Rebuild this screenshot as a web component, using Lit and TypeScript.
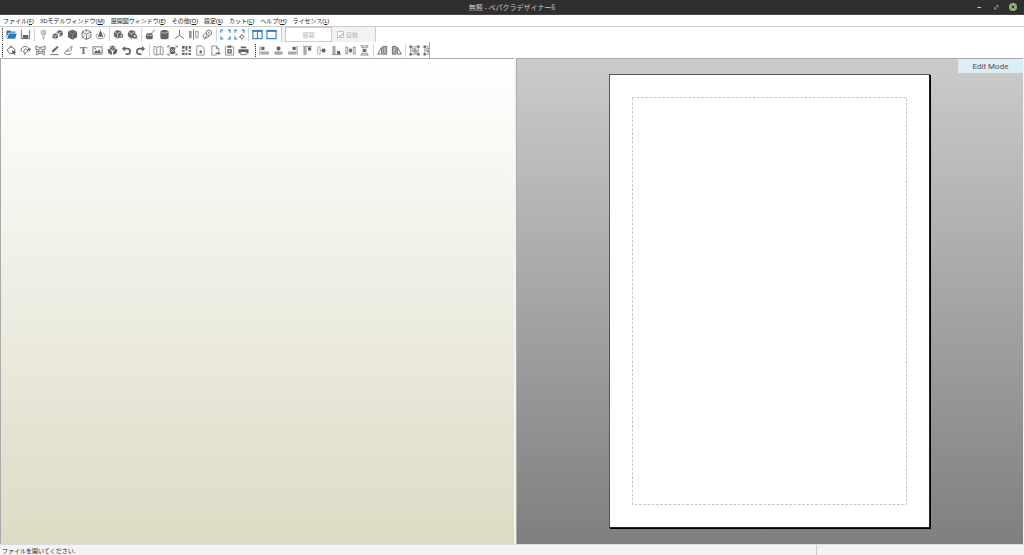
import { LitElement, html, svg, css, type SVGTemplateResult } from "lit";
import { customElement, property } from "lit/decorators.js";

type Tool = [id: string, label: string];

const ICONS: Record<string, SVGTemplateResult> = {
  open: svg`<path class="b" d="M.5 1.5h4l1 1.2h4.600v1.500H3L.5 9z"/><path class="b" d="M3.300 4.800h8.500L10 10.500H1z"/>`,
  save: svg`<path class="l" d="M1.500 1v9.500h9V1"/><path class="f" d="M3 6.500h6v4H3z"/>`,
  bulb: svg`<path fill="#c4c4c4" d="M6 .5a3.300 3.300 0 0 1 2 6L7.500 8h-3L4 6.500a3.300 3.300 0 0 1 2-6z"/><path class="l" stroke="#aaa" d="M5 9.500h2M5.500 11h1"/>`,
  cubes: svg`<path class="f" d="M.5 6.200 3.500 4.500 6.500 6v3.500L3.500 11 .5 9.500z"/><path class="f" d="M5 3 8.500 1 11.700 2.700v4L8 8.500V5.600L5 4z"/><path class="w" d="M1 6.500 3.500 8v2.500M3.500 8l2.500-1.500M6 3.200l2.500 1.300 2.700-1.500M8.500 4.500v3"/>`,
  solid: svg`<path class="f" d="M6 .5 11 3v6L6 11.700 1 9V3z"/><path class="w" opacity=".35" d="M1.500 3.500 6 5.700l4.500-2.200M6 5.700V11"/>`,
  wire: svg`<path class="l" d="M6 .8 10.800 3.200v5.600L6 11.400 1.200 8.800V3.200zM1.200 3.200 6 5.800l4.800-2.600M6 5.800v5.600"/><path class="t" d="M6 .8v3M1.200 8.800 4 7M10.800 8.800 8 7"/>`,
  spin: svg`<path class="f" d="M6 1 9 8.500H3z"/><path class="t" d="M3 4.500C.5 6.500.5 10.500 6 10.500s5.500-4 3-6"/>`,
  texA: svg`<path class="f" d="M1 3.500 4.500 1 9 2.500v6L5 10.500 1 8z"/><path class="w" d="M5 5v5M1.500 3.800 5 5l3.500-2"/><path class="f" d="M7 5.500h4v4H7z"/><path class="w" d="M9 6v3M7.500 7.500h3"/>`,
  texB: svg`<path class="f" d="M1 3.500 4.500 1 9 2.500v6L5 10.500 1 8z"/><path class="w" d="M5 5v2M1.500 3.800 5 5l3.500-2"/><circle class="f" cx="8.500" cy="8" r="2.500"/><circle fill="#fff" cx="8.300" cy="7.800" r="1"/><path class="l" d="m10 9.500 1.500 1.800"/>`,
  edgeA: svg`<path class="f" d="M1 5.500 3 4.500h4L8.500 6v4L7 11.300H3L1 10z"/><path class="w" d="M1.500 6 3.500 7H8"/><path class="l" d="M6 5.500 11 1"/>`,
  edgeB: svg`<path class="f" d="M1.500 3c0-2.500 9-2.500 9 0v6.500c0 2.400-9 2.400-9 0z"/><path class="w" d="M2.200 3.200c1 1.700 6.600 1.700 7.600 0"/>`,
  axes: svg`<path class="l" d="M6 1v6L1 10.500M6 7l5 3.500"/>`,
  mirror: svg`<path fill="#999" d="M1 2h3v8H1z"/><path class="l" d="M6 .5v11"/><path class="t" d="M8.500 2.500h2.500v7H8.500z"/>`,
  link: svg`<circle class="l" cx="7.500" cy="4.200" r="3"/><circle class="t" cx="7.500" cy="4.200" r=".8"/><path class="l" d="M4.500 3.700 1 7.500l2 3.200L8 8M3 10l2.500-3"/>`,
  fit: svg`<path class="bl" d="M1 4V1.200h2.500M8.500 1.200H11V4M11 8v2.800H8.500M3.500 10.800H1V8"/>`,
  fitSet: svg`<path class="bl" d="M1 4V1.200h2.500M8.500 1.200H11V4M3.500 10.800H1V8"/><circle class="l" cx="8.500" cy="8.500" r="1.800"/><path class="t" d="M8.500 5.500V7M8.500 10v1.500M5.500 8.500H7M10 8.500h1.500"/>`,
  split: svg`<path class="bl" d="M1 2h10v8.500H1zM6 2v8.500"/><path class="b" d="M.5 1h11v2H.5z"/>`,
  single: svg`<path class="bl" d="M1 2h10v8.500H1z"/><path class="b" d="M.5 1h11v2H.5z"/>`,
  pick: svg`<path class="l" d="M5.500 1.500 10 5 8.500 9 4 9.500 1 5.500z"/><path class="f" d="M6.500 5.500 11.500 8 9.500 8.800l1 2-1 .5-1-2L7 10.500zM5 .5 7 2.500 3.500 3z"/>`,
  rotate: svg`<path class="l" d="M1.500 7.500C-.5 3 5 0 8.500 2.500l2 3"/><path class="f" d="m11.500 3-.5 4-3-2z"/><path class="l" d="M4 6.500 6 4l3 2.500-2 1L5 10.500z"/>`,
  join: svg`<path class="l" d="M1 1v4h3l2-1.500L8 5h3V1L8 2.500H4zM2 7v4l2-2h4l2 2V7"/><path class="t" d="M4 5v4M8 5v4M1 7h10"/>`,
  pen: svg`<path class="f" d="m3 8 .5-2L9 1l1.500 1.500L5 8z"/><path class="l" d="M1 10.500h9.500"/>`,
  fold: svg`<path class="t" d="M4 6 10 1 9 5.500 5 7z"/><path class="l" d="M5 6C1 7 1 10.500 5 10.500l4-1"/>`,
  text: svg`<text x="6" y="10" text-anchor="middle">T</text>`,
  image: svg`<path class="l" d="M1 2h10v8H1z"/><path class="f" d="m2 9 2.500-3.500L6 7l2-2.500L10 9z"/><circle class="f" cx="3.500" cy="4" r=".8"/>`,
  blocks: svg`<path class="f" d="M6 .5 9 2v2.500L6 6 3 4.500V2zM.5 5 2.500 4.300 5.300 7v4L1.500 9zM11.500 5 9.500 4.300 6.700 7v4l3.800-2z"/><path class="w" d="M3.500 2.300 6 3.500l2.500-1.200"/>`,
  undo: svg`<path class="k" d="M2.500 4h4.500c4 0 4 6 0 6H5"/><path class="f" d="M4.500 1v6L1 4z"/>`,
  redo: svg`<path class="k" d="M9.500 4H5c-4 0-4 6 0 6h2"/><path class="f" d="M7.500 1v6L11 4z"/>`,
  map: svg`<path class="t" d="M1 1.500 4 2.500v8.500L1 10zM4 2.500l4-1V10l-4 1M8 1.500l3 1V11l-3-1"/>`,
  group: svg`<path class="l" d="M1 3V1h2M9 1h2v2M11 9v2H9M3 11H1V9"/><path class="f" d="M2.500 3 6 2l3.500 1-1 3 1 3L6 10 2.500 9l1-3z"/><path class="w" d="m4 4 4 4M8 4 4 8"/>`,
  order: svg`<path class="f" d="M1 1h3v3H1zM5 1h2v5H5zM8.500 1h2.500v3H8.500zM1 5.500h3V7H1zM1 8.500h3V11H1zM5 8.500h2V11H5zM8.500 5.500H11V7H8.500zM8 9h3v2H8z"/>`,
  pageUp: svg`<path class="t" d="M2 1h5.500L10 3.500V11H2z"/><path class="f" d="M5 6h2.500v3H5z"/>`,
  pageOut: svg`<path class="t" d="M7.500 11H2V1h5l2.500 2.500V7M7 1v3h2.500"/><path class="f" d="M6 8.500h3V7l2.500 2L9 11V9.800H6z"/>`,
  clip: svg`<path class="t" d="M1.500 2h9v9h-9z"/><path class="f" d="M4 .5h4v2.500H4zM3.500 4.500h5v4.800h-5z"/><circle fill="#fff" cx="6" cy="6.800" r="1"/>`,
  print: svg`<path class="f" d="M3 1.500h6v2H3zM.5 4.500h11V9H9.500V7.500h-7V9H.5z"/><path class="l" d="M3 8v2.500h6V8"/>`,
  alL: svg`<path class="t" d="M1 1v10"/><path class="f" d="M2.500 2h3.500v3.500H2.500z"/><path class="g" d="M2.500 7.500h8v2.500h-8z"/>`,
  alC: svg`<path class="t" d="M6 1v10"/><path class="f" d="M4 2h4v3.500H4z"/><path class="g" d="M2 7.500h8v2.500H2z"/>`,
  alR: svg`<path class="t" d="M11 1v10"/><path class="f" d="M6 2h3.500v3.500H6z"/><path class="g" d="M1.500 7.500h8v2.500h-8z"/>`,
  alT: svg`<path class="t" d="M1 1.500h10"/><path class="g" d="M2 2.500h2.500v8H2z"/><path class="f" d="M6.500 2.500H10V6H6.500z"/>`,
  alM: svg`<path class="t" d="M1 6h10"/><path class="g o" d="M2 2h2.500v8H2z"/><path class="f" d="M6.500 4H10v4H6.500z"/>`,
  alB: svg`<path class="t" d="M1 10.500h10"/><path class="g" d="M2 1.500h2.500v8.500H2z"/><path class="f" d="M6.500 6.500H10V10H6.500z"/>`,
  spH: svg`<path class="t" d="M1 1.500v9M11 1.500v9"/><path class="f" d="M4.500 4h3v4h-3z"/><path class="t" d="M1 2.500h2v7H1M11 2.500H9v7h2"/>`,
  spV: svg`<path class="t" d="M1.500 1h9M1.500 11h9"/><path class="f" d="M4 4.500h4v3H4z"/><path class="t" d="M3 1v2h6V1M3 11V9h6v2"/>`,
  triL: svg`<path class="d" d="M.8 10 5 2.500V10z"/><path class="d g" d="M6.500 1.500H10.500V10h-4z"/>`,
  triR: svg`<path class="d g" d="M1.500 1.500h4V10h-4z"/><path class="d" d="M7 2.500 11.200 10H7z"/>`,
  frame: svg`<path class="t" d="M2 2h8v8H2zM4 4h3v3H4zM5.500 5.500H8.500v3H5.500z"/><path class="f" d="M.5.500h2.500V3H.5zM9 .5h2.500V3H9zM.5 9H3v2.500H.5zM9 9h2.500v2.500H9z"/>`,
};

const MAIN: Tool[][] = [
  [["open", "開く"], ["save", "保存"]],
  [["bulb", "光源"], ["cubes", "テクスチャ"], ["solid", "面"], ["wire", "線"], ["spin", "回転"]],
  [["texA", "面の色"], ["texB", "面の選択"]],
  [["edgeA", "辺の編集"], ["edgeB", "円柱"], ["axes", "座標軸"], ["mirror", "反転"], ["link", "連動"]],
  [["fit", "全体表示"], ["fitSet", "表示設定"]],
  [["split", "2画面"], ["single", "1画面"]],
];
const EDIT: Tool[][] = [
  [["pick", "選択・移動"], ["rotate", "回転"], ["join", "面の結合"], ["pen", "線の色"], ["fold", "のりしろ"],
   ["text", "テキスト"], ["image", "画像"], ["blocks", "部品"], ["undo", "元に戻す"], ["redo", "やり直す"]],
  [["map", "展開図"], ["group", "グループ"], ["order", "整列"], ["pageUp", "用紙"], ["pageOut", "書き出し"],
   ["clip", "コピー"], ["print", "印刷"]],
];
const ALIGN: Tool[][] = [
  [["alL", "左揃え"], ["alC", "左右中央"], ["alR", "右揃え"], ["alT", "上揃え"], ["alM", "上下中央"],
   ["alB", "下揃え"], ["spH", "左右等間隔"], ["spV", "上下等間隔"]],
  [["triL", "左回転"], ["triR", "右回転"]],
  [["frame", "枠"], ["frame", "枠の解除"]],
];
const MENUS = [
  ["ファイル", "F"], ["3Dモデルウィンドウ", "M"], ["展開図ウィンドウ", "E"], ["その他", "O"],
  ["設定", "S"], ["カット", "C"], ["ヘルプ", "H"], ["ライセンス", "L"],
];
const TOOL_PITCH = 14.35;

@customElement("tool-strip")
class ToolStrip extends LitElement {
  @property({ attribute: false }) groups: Tool[][] = [];

  static styles = css`
    :host { display: flex; flex: none; align-items: center; }
    .grip { width: 1px; height: 13px; margin: 0 1px 0 2px;
      background: repeating-linear-gradient(#444 0 1px, #ccc 1px 2px); }
    .group { display: flex; flex: none; }
    .sep { flex: none; width: 1px; height: 13px; margin: 0 1px; background: #d4d4d4; }
    button { flex: 1; min-width: 0; height: 14px; display: flex; align-items: center;
      justify-content: center; padding: 0; border: 0; background: none; }
    button:hover { background: #e5f1fb; }
    svg { flex: none; width: 11px; height: 11px; display: block; overflow: visible; }
    .f { fill: #646464; }
    .g { fill: #b4b4b4; stroke: #858585; stroke-width: .6; }
    .d { fill: #fff; stroke: #666; stroke-width: 1; }
    .d.g { fill: #b4b4b4; }
    .o { fill: #fff; }
    .b { fill: #2c7bb8; }
    .l, .t, .w, .k, .bl { fill: none; stroke: #6c6c6c; stroke-width: 1; }
    .t { stroke: #808080; stroke-width: .9; }
    .w { stroke: #fff; stroke-width: .6; }
    .k { stroke: #646464; stroke-width: 1.8; }
    .bl { stroke: #3d87bf; stroke-width: 1.3; }
    text { font: bold 12px/12px "Liberation Serif", serif; fill: #707070; }
  `;

  render() {
    return html`<span class="grip"></span>${this.groups.map((g, i) => html`
      ${i ? html`<span class="sep"></span>` : ""}
      <div class="group" style="width:${Math.round(g.length * TOOL_PITCH)}px">
        ${g.map(([id, label]) => html`<button aria-label=${label} title=${label}>
          <svg viewBox="0 0 12 12">${ICONS[id]}</svg></button>`)}
      </div>`)}`;
  }
}

@customElement("app-root")
class AppRoot extends LitElement {
  static styles = css`
    :host { display: flex; flex-direction: column; height: 100vh; overflow: hidden;
      background: #fff; color: #333; font: 6px/10px "Noto Sans", "Noto Sans CJK JP", sans-serif; }
    button { font: inherit; color: inherit; padding: 0; border: 0; background: none; }
    .title { display: grid; grid-template-columns: 1fr auto 1fr; align-items: center; height: 15px;
      flex: none; box-sizing: border-box; background: #2f2f2f; border-bottom: 1px solid #4a4446; color: #c8c8c8; }
    .title h1 { grid-column: 2; margin: 0; font: 7px/10px "Noto Sans CJK JP", sans-serif; }
    .controls { display: flex; justify-content: flex-end; gap: 7px; padding-right: 6px; }
    .controls button { width: 10px; height: 10px; }
    .controls svg { display: block; width: 10px; height: 10px; }
    .menu { display: flex; gap: 6px; height: 11px; flex: none; align-items: center; padding: 0 3px;
      border-bottom: 1px solid #ccc; }
    .menu button { white-space: nowrap; color: #222; }
    .bars { flex: none; display: flex; flex-direction: column; }
    .bar { display: flex; height: 15px; align-items: center; gap: 2px; }
    .bar.edit { width: 430px; height: 16px; overflow: hidden; box-sizing: border-box; border-right: 1px solid #aaa; }
    .unfold { display: flex; height: 15px; padding-left: 3px; border-left: 1px solid #ccc;
      border-right: 1px solid #ccc; background: #f2f2f2; color: #b4b4b4; box-sizing: border-box; }
    .unfold button { width: 47px; border: 1px solid #ccc; background: #fff; color: #b4b4b4; }
    .unfold label { display: flex; align-items: center; gap: 2px; width: 43px; padding-left: 5px;
      box-sizing: border-box; }
    .unfold input { appearance: none; width: 7px; height: 7px; margin: 0; border: 1px solid #c4c4c4;
      background: #fff; display: grid; place-items: center; }
    .unfold input:checked::before { content: ""; width: 3px; height: 1px; border: solid #aaa;
      border-width: 0 0 1px 1px; transform: rotate(-45deg); }
    .views { flex: 1; min-height: 0; display: grid; grid-template-columns: 514fr 508fr; gap: 2px;
      box-sizing: border-box; background: #f4f4f4; border-bottom: 1px solid #dcdcdc; }
    .model, .pattern { border: 1px solid #aaa; border-width: 1px 0 0 1px; min-height: 0; }
    .model { background: linear-gradient(#fff, #dcdbc5); }
    .pattern { position: relative; display: flex; justify-content: center; padding: 15px 2px 16px 0;
      box-sizing: border-box; margin-right: 1px; background: linear-gradient(#cbcbcb, #7f7f7f); }
    .mode { position: absolute; top: 0; right: 0; width: 65px; height: 14px; background: #ddedf6;
      color: #505050; font: 8px/15px Roboto, sans-serif; text-align: center; }
    .paper { aspect-ratio: 321 / 454; height: 100%; box-sizing: border-box; padding: 22px;
      background: #fff; border: 1px solid #555; border-color: #555 #222 #222 #555; box-shadow: 1px 1px #000; }
    .paper svg { display: block; width: 100%; height: 100%; }
    .paper rect { width: calc(100% - 1px); height: calc(100% - 1px); fill: none; stroke: #c4c4c4;
      stroke-dasharray: 2.6 1.700; }
    .status { flex: none; display: grid; grid-template-columns: 816fr 208fr; height: 10px;
      background: #f3f3f3; color: #222; }
    .status span { padding-left: 2px; line-height: 12px; }
    .status span + span { border-left: 1px solid #ccc; }
  `;

  render() {
    return html`
      <header class="title">
        <h1>無題 - ペパクラデザイナー6</h1>
        <div class="controls">
          <button aria-label="最小化"><svg viewBox="0 0 10 10"><path d="M3.500 5.500h3.500" stroke="#ccc"/></svg></button>
          <button aria-label="最大化"><svg viewBox="0 0 10 10"><path d="M5.200 3.500H7v1.800M3.500 5.200V7h1.800M7 3.500 3.500 7" fill="none" stroke="#aaa" stroke-width=".7"/></svg></button>
          <button aria-label="閉じる"><svg viewBox="0 0 10 10"><circle cx="5" cy="5" r="4" fill="#92b372"/><path d="m3.500 3.500 3 3M6.500 3.500l-3 3" stroke="#2f2f2f"/></svg></button>
        </div>
      </header>
      <nav class="menu">${MENUS.map(([t, k]) => html`<button>${t}(<u>${k}</u>)</button>`)}</nav>
      <div class="bars">
        <div class="bar">
          <tool-strip .groups=${MAIN}></tool-strip>
          <div class="unfold">
            <button disabled>展開</button>
            <label><input type="checkbox" checked disabled>自動</label>
          </div>
        </div>
        <div class="bar edit">
          <tool-strip .groups=${EDIT}></tool-strip>
          <tool-strip .groups=${ALIGN}></tool-strip>
        </div>
      </div>
      <main class="views">
        <section class="model" aria-label="3Dモデル"></section>
        <section class="pattern" aria-label="展開図">
          <div class="paper"><svg><rect x=".5" y=".5"/></svg></div>
          <div class="mode">Edit Mode</div>
        </section>
      </main>
      <footer class="status"><span>ファイルを開いてください.</span><span></span></footer>
    `;
  }
}
